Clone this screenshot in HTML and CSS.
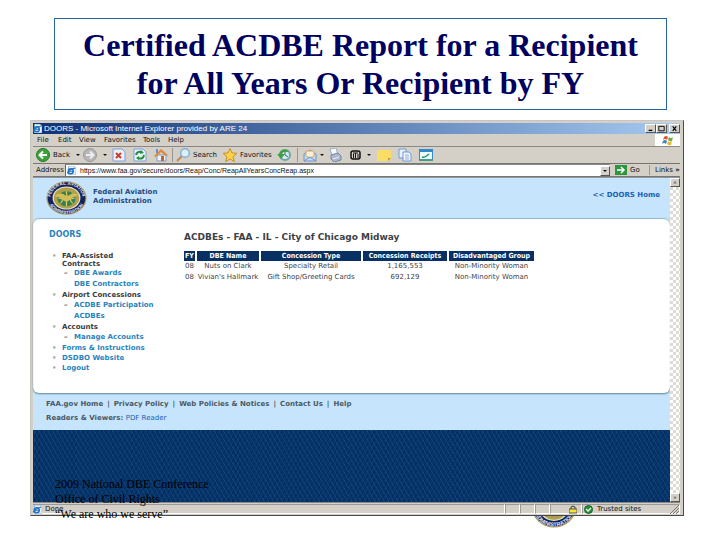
FILE: index.html
```html
<!DOCTYPE html>
<html lang="en">
<head>
<meta charset="utf-8">
<title>Certified ACDBE Report</title>
<link rel="stylesheet" href="styles.css">
</head>
<body>
<svg class="defs" aria-hidden="true">
  <defs>
    <path id="arc-top" d="M11 50a39 39 0 0 1 78 0"/>
    <path id="arc-bottom" d="M4 50a46 46 0 0 0 92 0"/>
    <symbol id="seal" viewBox="0 0 100 100" preserveAspectRatio="none">
      <circle cx="50" cy="50" r="49" fill="#a99a62"/>
      <circle cx="50" cy="50" r="46" fill="#14235f"/>
      <g fill="#e8ecf6" font-family="Liberation Sans, sans-serif" font-size="12" font-weight="bold" text-anchor="middle">
        <text><textPath href="#arc-top" startOffset="50%">FEDERAL AVIATION</textPath></text>
        <text><textPath href="#arc-bottom" startOffset="50%">ADMINISTRATION</textPath></text>
      </g>
      <circle cx="50" cy="50" r="34" fill="#e9e5c8"/>
      <circle cx="50" cy="50" r="31" fill="#b0a04c"/>
      <circle cx="50" cy="52" r="22" fill="#38804c"/>
      <path d="M30 50q20 8 40 0M50 30v44M35 37q12 15 0 29M65 37q-12 15 0 29" stroke="#d6cb78" stroke-width="3" fill="none"/>
      <path d="M20 44q18-14 28 0l2-10 3 10q14-14 27-2-14 3-22 14l-8 6-9-6q-8-10-21-12z" fill="#d4bd55"/>
    </symbol>
    <symbol id="ie" viewBox="0 0 12 12">
      <path d="M2 0h7l3 3v9H2z" fill="#e9f3ff" stroke="#86a9cf"/>
      <circle cx="5" cy="7" r="3.300" fill="none" stroke="#2272bd" stroke-width="2"/>
      <path d="M3 7h6M0 10Q5 3 11 3" stroke="#2272bd" stroke-width="1.500" fill="none"/>
    </symbol>
  </defs>
</svg>

<main class="slide">
  <h1 class="slide-title">Certified ACDBE Report for a Recipient<br>for All Years Or Recipient by FY</h1>

  <section class="window">
    <header class="titlebar">
      <svg class="tiny-icon"><use href="#ie"/></svg>
      <span class="window-name">DOORS - Microsoft Internet Explorer provided by ARE 24</span>
      <button class="caption" aria-label="Minimize"><svg viewBox="0 0 10 8"><path d="M3 6h4" stroke="#000" stroke-width="1.500"/></svg></button>
      <button class="caption" aria-label="Maximize"><svg viewBox="0 0 10 8"><path d="M2 1.500h6v5H2z" stroke="#000" fill="none"/></svg></button>
      <button class="caption caption-close" aria-label="Close"><svg viewBox="0 0 10 8"><path d="M3 1.500l4 5M7 1.500l-4 5" stroke="#000" stroke-width="1.300"/></svg></button>
    </header>

    <nav class="menubar">
      <button class="menu-item">File</button>
      <button class="menu-item">Edit</button>
      <button class="menu-item menu-wide">View</button>
      <button class="menu-item menu-widest">Favorites</button>
      <button class="menu-item menu-wide">Tools</button>
      <button class="menu-item">Help</button>
      <span class="brand"><svg viewBox="0 0 14 11"><path d="M3 2q2-2 4 0L6 5Q4 3 2 5z" fill="#e0562c"/><path d="M8 2q2 2 4 0l-1 4Q9 7 7 5z" fill="#72ad3d"/><path d="M2 6q2-2 4 0L5 9Q3 7 1 9z" fill="#3d83c9"/><path d="M7 6q2 2 4 0l-1 4q-2 1-4-1z" fill="#edb92c"/></svg></span>
    </nav>

    <div class="toolbar">
      <button class="tool tool-text"><svg viewBox="0 0 14 14"><circle cx="7" cy="7" r="6.500" fill="#39a335" stroke="#23772a"/><path d="M11 7H4M7 3.500L3.500 7 7 10.500" stroke="#fff" stroke-width="2" fill="none"/></svg><span>Back</span><i class="drop drop-far"></i></button>
      <button class="tool tool-forward" aria-label="Forward"><svg viewBox="0 0 14 14"><circle cx="7" cy="7" r="6.500" fill="#b6b6b6" stroke="#999"/><path d="M3 7h7M7 3.500L10.500 7 7 10.500" stroke="#eee" stroke-width="2" fill="none"/></svg><i class="drop drop-far"></i></button>
      <button class="tool" aria-label="Stop"><svg viewBox="0 0 14 14"><path d="M1 1h9l3 3v9H1z" fill="#e8f1ff" stroke="#7ca0d8"/><path d="M4 5l5 5M9 5l-5 5" stroke="#d13a25" stroke-width="2"/></svg></button>
      <button class="tool" aria-label="Refresh"><svg viewBox="0 0 14 14"><path d="M1 1h9l3 3v9H1z" fill="#e8f1ff" stroke="#7ca0d8"/><path d="M3 7q1-4 6-3M11 7q-1 5-6 3" stroke="#269039" stroke-width="2" fill="none"/><path d="M8 2l3 3-4 1zM6 8v4L3 10z" fill="#269039"/></svg></button>
      <button class="tool tool-end" aria-label="Home"><svg viewBox="0 0 14 14"><path d="M3 7h9v6H3z" fill="#eef3fa" stroke="#819bc2"/><path d="M0 8l7-7 7 6-2 1-5-4-5 5z" fill="#e2873a"/><path d="M7 8h3v5H7z" fill="#b9682c"/><path d="M2 1h2v4H2z" fill="#5f93cd"/></svg></button>
      <i class="divider"></i>
      <button class="tool tool-text"><svg viewBox="0 0 14 14"><path d="M1 13l5-5" stroke="#b98a5a" stroke-width="2"/><circle cx="9" cy="5" r="4.300" fill="#d8f0fc" stroke="#83aed3" stroke-width="1.400"/></svg><span>Search</span></button>
      <button class="tool tool-favorites"><svg viewBox="0 0 14 14"><path d="M7 .5l2 4.500 5 .3-4 3.400 1.500 5L7 11l-4.500 2.700L4 8.700 0 5.300 5 5z" fill="#fbd449" stroke="#cd8e23"/></svg><span>Favorites</span></button>
      <button class="tool tool-history" aria-label="History"><svg viewBox="0 0 14 14"><circle cx="8" cy="7" r="5" fill="#d5eaec" stroke="#74a5a6" stroke-width="2"/><path d="M8 3v4l3 2" stroke="#467" fill="none"/><path d="M12 3Q5-1 2 6H0l4 5 4-5H5q1-3 5-2z" fill="#3aa245"/></svg></button>
      <i class="divider divider-late"></i>
      <button class="tool tool-mail" aria-label="Mail"><svg viewBox="0 0 14 14"><path d="M1 6l6-4 6 4v7H1z" fill="#c3dcf7" stroke="#7194c6"/><path d="M3 3h8v5L7 10 3 8z" fill="#fff0d8" stroke="#d7a66f"/><path d="M1 13l6-4 6 4" stroke="#7194c6" fill="none"/></svg><i class="drop"></i></button>
      <button class="tool" aria-label="Print"><svg viewBox="0 0 14 14"><path d="M2 1l6-1 2 7H4z" fill="#f8fbff" stroke="#9aafc9"/><path d="M3 7l7-2 3 3v4l-7 2-3-3z" fill="#aab9cc" stroke="#7387a3"/><path d="M5 11l6-2" stroke="#eef"/></svg></button>
      <button class="tool tool-edit" aria-label="Edit"><svg viewBox="0 0 14 14"><rect x="2" y="3" width="9" height="8" rx="2" fill="none" stroke="#111" stroke-width="1.500"/><path d="M4 5h5M6.500 5v5M4.500 6v4M9 6v4" stroke="#111"/></svg><i class="drop drop-mid"></i></button>
      <button class="tool" aria-label="Note"><svg viewBox="0 0 14 14"><path d="M0 2h14v8l-3 3H0z" fill="#fbdd65"/><path d="M14 10h-3v3z" fill="#c29727"/></svg></button>
      <button class="tool" aria-label="Copy"><svg viewBox="0 0 14 14"><path d="M1 1h7v9H1z" fill="#e8f1ff" stroke="#6f99cf"/><path d="M5 4h6l2 2v7H5z" fill="#f2f7ff" stroke="#6f99cf"/><path d="M7 7h4M7 9h4M7 11h4" stroke="#8baedb"/></svg></button>
      <button class="tool" aria-label="Messenger"><svg viewBox="0 0 14 14"><path d="M.5 2h13v10H.5z" fill="#eefafa" stroke="#3b8bc5"/><path d="M0 1h14v3H0z" fill="#3188cc"/><path d="M3 9q3 1 7-3M0 12h14" stroke="#2c9476" stroke-width="1.500" fill="none"/></svg></button>
    </div>

    <div class="addressbar">
      <label for="address">Address</label>
      <span class="address-field">
        <svg class="tiny-icon"><use href="#ie"/></svg>
        <input id="address" type="text" value="https://www.faa.gov/secure/doors/Reap/Conc/ReapAllYearsConcReap.aspx">
        <button class="bevel" aria-label="Show addresses"><i class="drop"></i></button>
      </span>
      <button class="go"><svg viewBox="0 0 12 10"><path d="M0 0h12v10H0z" fill="#2c9540"/><path d="M2 5h7M6 2l3 3-3 3" stroke="#fff" stroke-width="1.500" fill="none"/></svg>Go</button>
      <button class="links">Links <b>»</b></button>
    </div>

    <div class="viewport">
      <div class="page">
        <header class="page-header">
          <svg class="page-seal"><use href="#seal"/></svg>
          <strong class="agency">Federal Aviation<br>Administration</strong>
          <a class="home-link" href="#">&lt;&lt; DOORS Home</a>
        </header>
        <div class="card">
          <nav class="side">
            <a class="side-title" href="#">DOORS</a>
            <ul class="tree">
              <li>FAA-Assisted<br>Contracts
                <ul>
                  <li><a href="#">DBE Awards</a></li>
                  <li class="plain"><a href="#">DBE Contractors</a></li>
                </ul>
              </li>
              <li>Airport Concessions
                <ul>
                  <li><a href="#">ACDBE Participation</a></li>
                  <li class="plain"><a href="#">ACDBEs</a></li>
                </ul>
              </li>
              <li>Accounts
                <ul>
                  <li><a href="#">Manage Accounts</a></li>
                </ul>
              </li>
              <li><a href="#">Forms &amp; Instructions</a></li>
              <li><a href="#">DSDBO Website</a></li>
              <li><a href="#">Logout</a></li>
            </ul>
          </nav>
          <article class="report">
            <h2>ACDBEs - FAA - IL - City of Chicago Midway</h2>
            <table>
              <colgroup><col class="col-fy"><col class="col-name"><col class="col-type"><col class="col-receipts"><col class="col-group"></colgroup>
              <thead><tr><th>FY</th><th>DBE Name</th><th>Concession Type</th><th>Concession Receipts</th><th>Disadvantaged Group</th></tr></thead>
              <tbody>
                <tr><td>08</td><td>Nuts on Clark</td><td>Specialty Retail</td><td>1,165,553</td><td>Non-Minority Woman</td></tr>
                <tr><td>08</td><td>Vivian's Hallmark</td><td>Gift Shop/Greeting Cards</td><td>692,129</td><td>Non-Minority Woman</td></tr>
              </tbody>
            </table>
          </article>
        </div>
        <footer class="page-footer">
          <p class="footer-links"><a href="#">FAA.gov Home</a>|<a href="#">Privacy Policy</a>|<a href="#">Web Policies &amp; Notices</a>|<a href="#">Contact Us</a>|<a href="#">Help</a></p>
          <p>Readers &amp; Viewers: <a class="pdf" href="#">PDF Reader</a></p>
        </footer>
        <div class="backdrop"></div>
      </div>
      <div class="scrollbar">
        <button class="bevel" aria-label="Scroll up"><svg viewBox="0 0 8 8"><path d="M2 5l2-3 2 3z" fill="#777"/></svg></button>
        <button class="bevel" aria-label="Scroll down"><svg viewBox="0 0 8 8"><path d="M2 3l2 3 2-3z" fill="#777"/></svg></button>
      </div>
    </div>

    <footer class="statusbar">
      <span class="status-main"><svg class="tiny-icon"><use href="#ie"/></svg>Done</span>
      <span class="status-cell"></span><span class="status-cell"></span><span class="status-cell"></span>
      <span class="status-cell status-lock"><svg viewBox="0 0 8 9"><path d="M2 4V2q2-2 4 0v2" stroke="#333" fill="none"/><path d="M0 4h8v4H0z" fill="#f5e62c" stroke="#555"/></svg></span>
      <span class="status-zone"><svg viewBox="0 0 9 9"><circle cx="4.500" cy="4.500" r="4" fill="#259235" stroke="#17602a"/><path d="M2 4l2 2 3-3" stroke="#fff" stroke-width="1.300" fill="none"/></svg>Trusted sites<svg class="grip" viewBox="0 0 9 9"><path d="M0 9l9-9M3 9l6-6M6 9l3-3" stroke="#777"/></svg></span>
    </footer>
  </section>

  <svg class="slide-seal"><use href="#seal"/></svg>
  <p class="slide-footer">2009 National DBE Conference<br>Office of Civil Rights<br>“We are who we serve”</p>
</main>
</body>
</html>
```
FILE: styles.css
```css
* { box-sizing: border-box; }
body { margin: 0; background: #fff; }
button, input { margin: 0; padding: 0; border: 0; background: none; color: inherit; font: inherit; }
a { color: inherit; text-decoration: none; }
p, h1, h2, ul { margin: 0; padding: 0; }
svg { display: block; flex: none; }
.defs { position: absolute; width: 0; height: 0; }

.slide { position: relative; padding: 18px 36px 24px 30px; }
.slide-title {
  margin: 0 17px 10px 24px;
  padding: 7px 0;
  border: 1px solid #2b659b;
  color: #000060;
  font: bold 32px/38px "Liberation Serif", serif;
  text-align: center;
}

.window {
  position: relative;
  z-index: 1;
  padding: 2px 3px 0 2px;
  border: 1px solid #c8c5bf;
  border-right-color: #4a4a4a;
  border-bottom-color: #4a4a4a;
  background: #d4d0c8;
  color: #111;
  font: 7px/10px "DejaVu Sans", sans-serif;
}
.tiny-icon { width: 9px; height: 9px; }

.titlebar { display: flex; align-items: center; height: 11px; background: linear-gradient(90deg, #0f3278, #a6caf0); color: #fff; }
.window-name { flex: 1; padding-left: 2px; white-space: nowrap; font: 8px/10px "Liberation Sans", sans-serif; }
.caption, .bevel { border: 1px solid; border-color: #fff #555 #555 #fff; background: #d4d0c8; }
.caption { width: 11px; height: 9px; }
.caption-close { margin-left: 2px; }

.menubar { display: flex; height: 13px; border-bottom: 1px solid #8a8882; padding-left: 4px; }
.menu-item { width: 21px; text-align: left; }
.menu-wide { width: 25px; }
.menu-widest { width: 39px; }
.brand { display: grid; place-items: center; width: 25px; margin-left: auto; background: #fff; }
.brand svg { width: 14px; height: 11px; }

.toolbar { display: flex; height: 17px; padding-left: 3px; border-bottom: 1px solid #77756f; }
.tool { display: flex; align-items: center; gap: 3px; width: 21px; white-space: nowrap; }
.tool svg { width: 14px; height: 14px; }
.tool-text { width: 47px; }
.tool-forward { width: 29px; }
.tool-end { width: 18px; }
.tool-favorites { width: 54px; }
.tool-history { width: 20px; }
.tool-mail { width: 25px; }
.tool-edit { width: 28px; }
.drop { border: 2px solid transparent; border-top-color: #111; border-bottom: 0; }
.drop-far { margin-left: 3px; }
.drop-mid { margin-left: 1px; }
.divider { width: 1px; margin: 1px 3px 1px 0; background: #99968e; }
.divider-late { margin-right: 5px; }

.addressbar { display: flex; align-items: center; height: 13px; padding-left: 3px; border-bottom: 1px solid #77756f; }
.addressbar label { width: 29px; }
.address-field { display: flex; align-items: center; flex: 1; height: 12px; padding-left: 1px; border-left: 1px solid #666; border-top: 1px solid #888; background: #fff; }
.address-field input { flex: 1; min-width: 0; height: 10px; padding-left: 4px; font: 7px/10px "Liberation Sans", sans-serif; }
.address-field .bevel { display: grid; place-items: center; width: 10px; height: 10px; }
.go { display: flex; align-items: center; gap: 3px; width: 34px; margin-left: 5px; }
.go svg { width: 12px; height: 10px; }
.links { width: 31px; padding-left: 5px; border-left: 1px solid #999; text-align: left; white-space: nowrap; }

.viewport { display: flex; border-top: 1px solid #8f989e; }
.page { flex: 1; background: #c6e5fd; font-size: 7px; font-weight: bold; }
.page-header { display: flex; align-items: center; height: 40px; padding: 0 10px 0 13px; color: #27487e; }
.page-seal { width: 41px; height: 34px; margin-right: 6px; }
.agency { align-self: flex-start; padding-top: 10px; font-size: 7px; line-height: 9px; }
.home-link { align-self: flex-start; margin-left: auto; padding-top: 12px; color: #1c62b3; }
.card { display: flex; min-height: 175px; border-radius: 6px; background: #fff; box-shadow: inset 0 1px 1px #8fb5cd, 0 1px 2px #5f8494; }

.side { width: 151px; padding: 12px 0 0 16px; color: #3b3b3b; }
.side-title { display: block; margin-bottom: 12px; color: #2d84bd; font-size: 8px; }
.side a { color: #2984bd; }
.tree, .tree ul { list-style: none; }
.tree { line-height: 10px; font-weight: bold; }
.tree > li { padding-left: 13px; white-space: nowrap; }
.tree > li:first-child { line-height: 8px; }
.tree > li::before { content: "•"; float: left; width: 10px; margin-left: -10px; color: #aaa; }
.tree ul { line-height: 11px; }
.tree ul li { padding-left: 12px; }
.tree ul li::before { content: "–"; float: left; width: 10px; margin-left: -10px; color: #555; }
.tree ul .plain::before { content: ""; }

.report { flex: 1; padding-top: 13px; color: #3f3f46; }
.report h2 { margin-bottom: 8px; font: bold 9px/12px "DejaVu Sans", sans-serif; }
.report table { border-collapse: separate; border-spacing: 2px 0; margin-left: -2px; table-layout: fixed; width: 354px; font-weight: normal; }
.report th { padding: 0; height: 10px; background: #083063; color: #fff; font: bold 7px/10px "DejaVu Sans Condensed", "Liberation Sans", sans-serif; white-space: nowrap; }
.report td { padding: 0; height: 11px; line-height: 11px; text-align: center; white-space: nowrap; font-size: 7px; }
.col-fy { width: 11px; }
.col-name { width: 62px; }
.col-type { width: 100px; }
.col-receipts { width: 84px; }

.page-footer { padding: 4px 13px 5px; color: #4b5965; line-height: 14px; }
.footer-links a { padding: 0 4px; }
.footer-links a:first-child { padding-left: 0; }
.pdf { color: #2060b5; font-weight: normal; }
.backdrop {
  height: 72px;
  background: repeating-linear-gradient(60deg, rgba(32, 79, 130, .5) 0 1px, transparent 1px 4px), repeating-linear-gradient(120deg, rgba(0, 31, 76, .5) 0 1px, transparent 1px 4px), #06356c;
}
.scrollbar { display: flex; flex-direction: column; justify-content: space-between; width: 10px; background: repeating-conic-gradient(#dedbd5 0 25%, #fff 0 50%) 0 0 / 6px 6px; }
.scrollbar .bevel { height: 9px; }
.scrollbar svg { width: 8px; height: 7px; }

.statusbar { display: flex; height: 13px; padding: 1px 0; border-top: 1px solid #888; }
.statusbar span { display: flex; align-items: center; border: 1px solid; border-color: #999 #fff #fff #999; }
.statusbar .status-main { flex: 1; gap: 3px; border-left: 0; }
.statusbar .status-cell { width: 15px; }
.statusbar .status-lock { width: 32px; justify-content: flex-end; padding-right: 4px; }
.status-lock svg { width: 8px; height: 9px; }
.statusbar .status-zone { width: 98px; gap: 4px; padding-left: 1px; }
.status-zone svg { width: 9px; height: 9px; }
.status-zone .grip { margin-left: auto; }

.slide-seal { position: absolute; left: 531px; bottom: 12px; width: 46px; height: 44px; }
.slide-footer { position: absolute; z-index: 2; left: 55px; bottom: 18px; color: #000; font: 12px/15px "Liberation Serif", serif; }
```
